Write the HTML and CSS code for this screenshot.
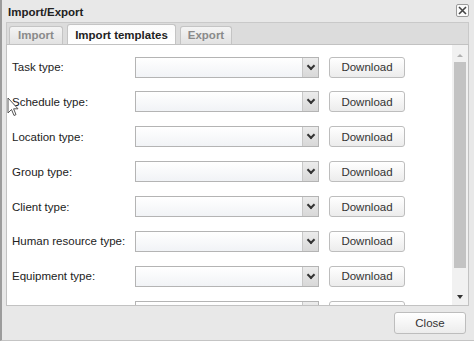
FILE: index.html
```html
<!DOCTYPE html>
<html lang="en">
  <head>
    <meta charset="utf-8">
    <title>Import/Export</title>
    <link rel="stylesheet" href="styles.css">
  </head>
  <body>
    <div class="window">
      <div class="title-bar">
        <span class="title">Import/Export</span>
        <span class="close-icon">
          <svg width="9" height="9" viewBox="0 0 9 9"><path d="M1 1 L8 8 M8 1 L1 8" stroke="#444" stroke-width="1.6"/></svg>
        </span>
      </div>
      <div class="tabs">
        <div class="tab">Import</div>
        <div class="tab active">Import templates</div>
        <div class="tab">Export</div>
      </div>
      <div class="panel">
        <div class="rows">
          <div class="row">
            <label>Task type:</label>
            <div class="select"><span class="arrow"></span></div>
            <button class="btn">Download</button>
          </div>
          <div class="row">
            <label>Schedule type:</label>
            <div class="select"><span class="arrow"></span></div>
            <button class="btn">Download</button>
          </div>
          <div class="row">
            <label>Location type:</label>
            <div class="select"><span class="arrow"></span></div>
            <button class="btn">Download</button>
          </div>
          <div class="row">
            <label>Group type:</label>
            <div class="select"><span class="arrow"></span></div>
            <button class="btn">Download</button>
          </div>
          <div class="row">
            <label>Client type:</label>
            <div class="select"><span class="arrow"></span></div>
            <button class="btn">Download</button>
          </div>
          <div class="row">
            <label>Human resource type:</label>
            <div class="select"><span class="arrow"></span></div>
            <button class="btn">Download</button>
          </div>
          <div class="row">
            <label>Equipment type:</label>
            <div class="select"><span class="arrow"></span></div>
            <button class="btn">Download</button>
          </div>
          <div class="row">
            <label></label>
            <div class="select"><span class="arrow"></span></div>
            <button class="btn"></button>
          </div>
        </div>
        <div class="scrollbar">
          <div class="scroll-up"></div>
          <div class="thumb"></div>
          <div class="scroll-down"></div>
        </div>
      </div>
      <div class="footer">
        <button class="btn close-btn">Close</button>
      </div>
    </div>
    <svg class="cursor" width="12" height="20" viewBox="0 0 12 20">
      <path d="M1 1 L1 16 L4.5 12.5 L7 18.5 L9 17.6 L6.6 11.8 L11 11.8 Z" fill="#fff" stroke="#555" stroke-width="1"/>
    </svg>
  </body>
</html>
```

FILE: styles.css
```css
body {
  margin: 0;
  font-family: "Liberation Sans", Arial, sans-serif;
  background: #fff;
}
.window {
  width: 474px;
  height: 341px;
  box-sizing: border-box;
  border-left: 2px solid #9c9c9c;
  border-bottom: 1px solid #c4c4c4;
  background: #e8e8e8;
  padding: 0 5px 0 4px;
  display: flex;
  flex-direction: column;
}
.title-bar {
  height: 22px;
  display: flex;
  align-items: center;
  justify-content: space-between;
  padding: 0 0 0 2px;
}
.title {
  font-weight: bold;
  font-size: 11.5px;
  color: #222;
  padding-top: 1px;
}
.close-icon {
  width: 11px;
  height: 11px;
  border: 1px solid #9a9a9a;
  border-radius: 2px;
  background: #fafafa;
  display: flex;
  align-items: center;
  justify-content: center;
  margin-top: -1px;
}
.tabs {
  height: 22px;
  box-sizing: border-box;
  background: #dcdcdc;
  border: 1px solid #c9c9c9;
  border-bottom: none;
  display: flex;
  align-items: flex-end;
  gap: 4px;
  padding-left: 2px;
}
.tab {
  height: 18px;
  box-sizing: border-box;
  border: 1px solid #c4c4c4;
  border-bottom: none;
  border-radius: 3px 3px 0 0;
  background: linear-gradient(#f4f4f4, #e2e2e2);
  color: #8a8a8a;
  font-weight: bold;
  font-size: 11.5px;
  padding: 2px 0 0;
  text-align: center;
}
.tab:first-child {
  width: 54px;
}
.tab:last-child {
  width: 52px;
}
.tab.active {
  width: 109px;
  height: 21px;
  background: linear-gradient(#fbfbfb, #ffffff);
  color: #222;
  padding-top: 4px;
  margin-bottom: -1px;
}
.panel {
  height: 262px;
  box-sizing: border-box;
  background: #fff;
  border: 1px solid #c2c2c2;
  display: flex;
  overflow: hidden;
}
.rows {
  flex: 1;
  display: flex;
  flex-direction: column;
  gap: 13.9px;
  padding: 11.5px 0 0 5px;
}
.row {
  height: 21px;
  flex-shrink: 0;
  display: flex;
  align-items: center;
}
.row label {
  width: 123px;
  font-size: 11.5px;
  color: #222;
}
.select {
  width: 184px;
  height: 21px;
  box-sizing: border-box;
  border: 1px solid #b4b4b4;
  background: linear-gradient(#ffffff, #f1f3f6);
  display: flex;
  justify-content: flex-end;
}
.arrow {
  width: 16px;
  height: 19px;
  box-sizing: border-box;
  border-left: 1px solid #c8c8c8;
  background: linear-gradient(#ececec, #d8d8d8);
  position: relative;
}
.arrow::after {
  content: "";
  position: absolute;
  left: 5px;
  top: 5px;
  width: 4px;
  height: 4px;
  border-right: 2px solid #333;
  border-bottom: 2px solid #333;
  transform: rotate(45deg);
}
.btn {
  height: 21px;
  box-sizing: border-box;
  border: 1px solid #bdbdbd;
  border-radius: 3px;
  background: linear-gradient(#ffffff, #ececec);
  font-family: "Liberation Sans", Arial, sans-serif;
  font-size: 11.5px;
  color: #333;
  padding: 0;
}
.row .btn {
  width: 76px;
  margin-left: 10px;
}
.scrollbar {
  width: 16px;
  background: #f1f1f1;
  display: flex;
  flex-direction: column;
  align-items: center;
}
.scroll-up {
  width: 0;
  height: 12px;
  box-sizing: border-box;
  border-left: 3px solid transparent;
  border-right: 3px solid transparent;
  border-top: 5px solid transparent;
  border-bottom: 3px solid #b0b0b0;
  margin-bottom: 5px;
}
.thumb {
  width: 12px;
  height: 206px;
  background: #c3c3c3;
}
.scroll-down {
  width: 0;
  border-left: 3px solid transparent;
  border-right: 3px solid transparent;
  border-top: 4px solid #333;
  margin-top: 27px;
}
.footer {
  flex: 1;
  display: flex;
  justify-content: flex-end;
  align-items: flex-start;
  padding-top: 6px;
}
.close-btn {
  width: 72px;
  height: 22px;
  margin-right: 3px;
}
.cursor {
  position: absolute;
  left: 7px;
  top: 97px;
}
```
